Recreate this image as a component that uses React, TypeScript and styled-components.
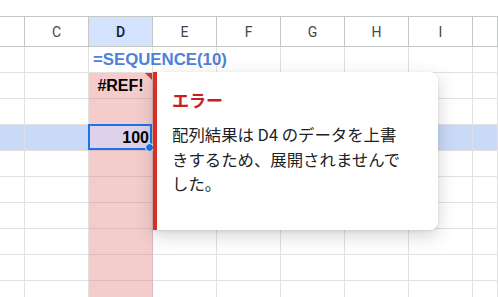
import styled, { createGlobalStyle } from "styled-components";

const GlobalStyle = createGlobalStyle`
  html, body {
    margin: 0;
    padding: 0;
    background: #ffffff;
    overflow: hidden;
  }
  * {
    box-sizing: border-box;
  }
`;

const COLUMNS = ["B", "C", "D", "E", "F", "G", "H", "I", "J"];
const ROW_COUNT = 10;
const ERROR_COL = 2; // D
const FORMULA_ROW = 0;
const REF_ROW = 1;
const SELECTED_ROW = 3;

const Page = styled.div`
  position: relative;
  width: 498px;
  height: 297px;
  padding-top: 16px;
  overflow: hidden;
  background: #ffffff;
  font-family: "Liberation Sans", Arial, sans-serif;
`;

const Sheet = styled.div`
  display: grid;
  grid-template-columns: 25px repeat(7, 64px) 1fr;
  grid-auto-rows: 26px;
  grid-template-rows: 30px;
  border-top: 1px solid #c4c7c5;
`;

const HeaderCell = styled.div<{ $active?: boolean }>`
  display: flex;
  align-items: center;
  justify-content: center;
  border-right: 1px solid #c4c7c5;
  border-bottom: 1px solid #c4c7c5;
  background: ${(p) => (p.$active ? "#d3e3fd" : "#ffffff")};
  color: ${(p) => (p.$active ? "#0b1a33" : "#444746")};
  font-family: Roboto, "Liberation Sans", sans-serif;
  font-size: 14px;
  font-weight: ${(p) => (p.$active ? 500 : 400)};
`;

type Tone = "plain" | "error" | "row" | "mixed";

const toneBg: Record<Tone, string> = {
  plain: "#ffffff",
  error: "#f4cccc",
  row: "#c9d9f8",
  mixed: "#ddd2e9",
};

const Cell = styled.div<{ $tone: Tone; $align?: "left" | "center" | "right" }>`
  position: relative;
  display: flex;
  align-items: center;
  justify-content: ${(p) =>
    p.$align === "right" ? "flex-end" : p.$align === "center" ? "center" : "flex-start"};
  padding: 0 3px;
  background: ${(p) => toneBg[p.$tone]};
  border-right: 1px solid
    ${(p) => (p.$tone === "error" || p.$tone === "mixed" ? "#dcb9bb" : "#e1e1e1")};
  border-bottom: 1px solid
    ${(p) => (p.$tone === "error" || p.$tone === "mixed" ? "#dcb9bb" : "#e1e1e1")};
  font-size: 16px;
  font-weight: 700;
  color: #000000;
  white-space: nowrap;
`;

const FormulaText = styled.span`
  color: #4e82d8;
  font-size: 16.8px;
  font-weight: 700;
  margin-left: 1px;
  position: relative;
  z-index: 1;
`;

const ErrorMark = styled.span`
  position: absolute;
  top: 0;
  right: 0;
  width: 0;
  height: 0;
  border-top: 7px solid #d93025;
  border-left: 7px solid transparent;
`;

const Selection = styled.span`
  position: absolute;
  inset: -1px 0 0 -1px;
  border: 2px solid #1a73e8;
  pointer-events: none;
`;

const FillHandle = styled.span`
  position: absolute;
  right: -4px;
  bottom: -4px;
  width: 9px;
  height: 9px;
  border-radius: 50%;
  background: #1a73e8;
  border: 1px solid #ffffff;
`;

const ErrorPopup = styled.div`
  position: absolute;
  left: 153px;
  top: 72px;
  width: 285px;
  height: 158px;
  padding: 17px 32px 0 15px;
  background: #ffffff;
  border-left: 4px solid #d93025;
  border-radius: 0 8px 8px 0;
  box-shadow: 0 6px 18px rgba(60, 64, 67, 0.22), 0 1px 3px rgba(60, 64, 67, 0.12);
  font-family: "Noto Sans CJK JP", "Noto Sans", sans-serif;
  z-index: 2;
`;

const PopupTitle = styled.div`
  color: #c5221f;
  font-size: 17px;
  font-weight: 700;
  line-height: 22px;
`;

const PopupBody = styled.p`
  margin: 11px 0 0;
  color: #202124;
  font-size: 16.4px;
  line-height: 24.5px;
`;

function cellTone(row: number, col: number): Tone {
  if (col === ERROR_COL && row >= REF_ROW) {
    return row === SELECTED_ROW ? "mixed" : "error";
  }
  if (row === SELECTED_ROW) return "row";
  return "plain";
}

const App = () => {
  const rows = Array.from({ length: ROW_COUNT }, (_, i) => i);

  return (
    <>
      <GlobalStyle />
      <Page>
        <Sheet>
          {COLUMNS.map((c, i) => (
            <HeaderCell key={c} $active={i === ERROR_COL}>
              {i === 0 || i === COLUMNS.length - 1 ? "" : c}
            </HeaderCell>
          ))}
          {rows.map((r) =>
            COLUMNS.map((c, col) => {
              const tone = cellTone(r, col);
              const key = `${c}${r}`;
              if (col === ERROR_COL && r === FORMULA_ROW) {
                return (
                  <Cell key={key} $tone={tone}>
                    <FormulaText>=SEQUENCE(10)</FormulaText>
                  </Cell>
                );
              }
              if (col === ERROR_COL && r === REF_ROW) {
                return (
                  <Cell key={key} $tone={tone} $align="center">
                    #REF!
                    <ErrorMark />
                  </Cell>
                );
              }
              if (col === ERROR_COL && r === SELECTED_ROW) {
                return (
                  <Cell key={key} $tone={tone} $align="right">
                    100
                    <Selection>
                      <FillHandle />
                    </Selection>
                  </Cell>
                );
              }
              return <Cell key={key} $tone={tone} />;
            })
          )}
        </Sheet>
        <ErrorPopup>
          <PopupTitle>エラー</PopupTitle>
          <PopupBody>
            配列結果は D4 のデータを上書きするため、展開されませんでした。
          </PopupBody>
        </ErrorPopup>
      </Page>
    </>
  );
};

export default App;
